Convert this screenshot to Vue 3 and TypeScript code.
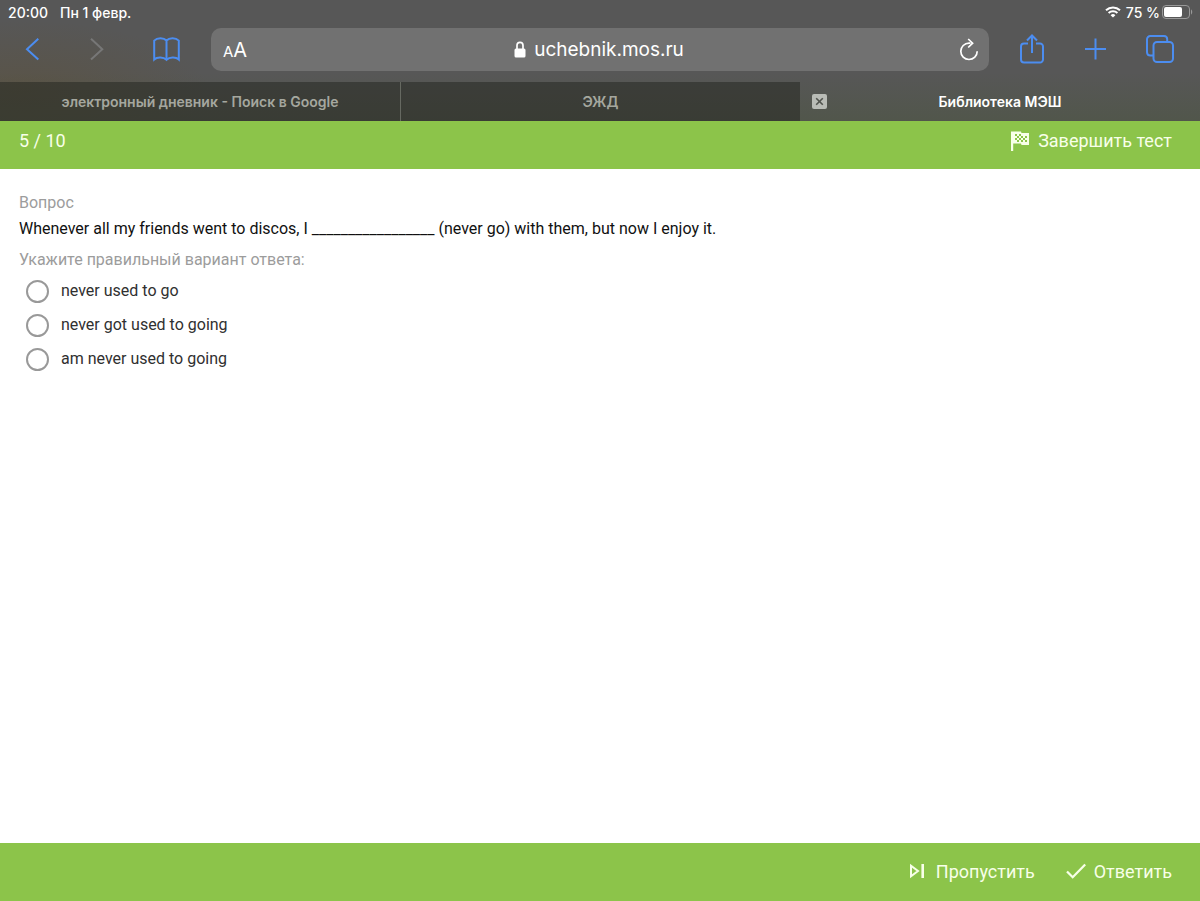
<script setup lang="ts">
import { ref } from 'vue'

interface Tab {
  title: string
  active: boolean
}

const tabs: Tab[] = [
  { title: 'электронный дневник - Поиск в Google', active: false },
  { title: 'ЭЖД', active: false },
  { title: 'Библиотека МЭШ', active: true },
]

const answers: string[] = ['never used to go', 'never got used to going', 'am never used to going']
const selected = ref<string>('')
</script>

<template>
  <div class="screen">
    <header class="browser">
      <div class="status">
        <span>20:00</span>
        <span class="date">Пн 1 февр.</span>
        <svg class="wifi" width="16" height="12" viewBox="0 0 16 12" fill="none" stroke="#fff" stroke-width="2">
          <path d="M1 4.3a10.2 10.2 0 0 1 14 0" />
          <path d="M3.6 7a6.4 6.4 0 0 1 8.8 0" />
          <path d="M8 11.6 5.6 9.2a3.4 3.4 0 0 1 4.8 0z" fill="#fff" stroke="none" />
        </svg>
        <span>75 %</span>
        <svg class="battery" width="31" height="14" viewBox="0 0 31 14" fill="none">
          <rect x="0.5" y="0.5" width="27" height="13" rx="3.5" stroke="#999" />
          <rect x="2" y="2" width="18" height="10" rx="2" fill="#fff" />
          <path d="M29 4.5c1.6.6 1.6 4.4 0 5z" fill="#999" />
        </svg>
      </div>

      <nav class="toolbar" aria-label="Safari">
        <div class="tools">
          <button type="button" aria-label="Назад">
            <svg width="28" height="28" viewBox="0 0 28 28"><path d="M19.3 3.8 8 14.2l11.3 10.4" /></svg>
          </button>
          <button type="button" aria-label="Вперёд" disabled>
            <svg width="28" height="28" viewBox="0 0 28 28"><path d="M8 3.8l11.3 10.4L8 24.6" /></svg>
          </button>
          <button type="button" class="book" aria-label="Закладки">
            <svg width="28" height="28" viewBox="0 0 28 28">
              <path d="M13.500 5.500C10.800 2.500 4.300 2.300 1.200 5.600V24.500C4.100 21.800 10.600 22 13.500 24.800 16.400 22 22.900 21.800 25.800 24.500V5.600C22.700 2.300 16.200 2.500 13.500 5.500zM13.500 5.500v19" />
            </svg>
          </button>
        </div>

        <div class="address">
          <button type="button" class="reader" aria-label="Параметры страницы"><span class="small">A</span>A</button>
          <a class="url" href="#">
            <svg width="12" height="17" viewBox="0 0 12 17">
              <path d="M3 8V4.600a3 3.300 0 0 1 6 0V8" fill="none" stroke="#fff" stroke-width="1.700" />
              <rect x="0.500" y="7.500" width="11" height="9" rx="1.500" fill="#fff" />
            </svg>
            <span>uchebnik.mos.ru</span>
          </a>
          <button type="button" class="reload" aria-label="Обновить">
            <svg width="20" height="24" viewBox="0 0 20 24" fill="none" stroke="#fff" stroke-width="1.700">
              <path d="M11.500 5.100H10a8.200 8.200 0 1 0 8.200 8.200" />
              <path d="M9.200 1l4.400 4.200-4.400 4.300" />
            </svg>
          </button>
        </div>

        <div class="tools">
          <button type="button" aria-label="Поделиться">
            <svg width="28" height="30" viewBox="0 0 28 30">
              <path d="M10 9.500H6a3 3 0 0 0-3 3V25.500a3 3 0 0 0 3 3H22a3 3 0 0 0 3-3V12.500a3 3 0 0 0-3-3h-4M14 19V1.500M9 6.500l5-5 5 5" />
            </svg>
          </button>
          <button type="button" aria-label="Новая вкладка">
            <svg width="28" height="28" viewBox="0 0 28 28"><path d="M13.500 3.500v21M3 14h21" /></svg>
          </button>
          <button type="button" aria-label="Все вкладки">
            <svg width="28" height="28" viewBox="0 0 28 28">
              <rect x="7.500" y="7" width="19.500" height="20" rx="3.500" />
              <path d="M7 20.500H4.300A3.300 3.300 0 0 1 1 17.300V4.300A3.300 3.300 0 0 1 4.300 1H18A3.300 3.300 0 0 1 21.200 4.300V7" />
            </svg>
          </button>
        </div>
      </nav>

      <div class="tabs">
        <div v-for="tab in tabs" :key="tab.title" class="tab" :class="{ active: tab.active }">
          <button v-if="tab.active" type="button" class="close" aria-label="Закрыть вкладку">
            <svg width="15" height="15" viewBox="0 0 15 15">
              <rect width="15" height="15" rx="2" fill="#b9bcb6" />
              <path d="M4.200 4.200l6.600 6.600M10.800 4.200l-6.600 6.600" stroke="#50534d" stroke-width="1.600" />
            </svg>
          </button>
          <a href="#">{{ tab.title }}</a>
        </div>
      </div>
    </header>

    <div class="testbar">
      <span>5 / 10</span>
      <button type="button" class="action">
        <svg width="20" height="22" viewBox="0 0 20 22">
          <path d="M1 1.500H11L11.500 3H19V15H11.500L11 13.500H3.200V21H1z" fill="#f8ffe9" />
          <path
            d="M5 4h2v2H5zM9 4h2v2H9zM7 6h2v2H7zM11 6h2v2h-2zM5 8h2v2H5zM9 8h2v2H9zM13 8h2v2h-2zM7 10h2v2H7zM11 10h2v2h-2zM15 6h2v2h-2zM15 10h2v2h-2z"
            fill="#8cc44a"
          />
        </svg>
        <span>Завершить тест</span>
      </button>
    </div>

    <main class="content">
      <h1 class="caption">Вопрос</h1>
      <p class="question">Whenever all my friends went to discos, I _________________ (never go) with them, but now I enjoy it.</p>
      <fieldset class="answers">
        <legend class="caption">Укажите правильный вариант ответа:</legend>
        <label v-for="answer in answers" :key="answer" class="answer">
          <input v-model="selected" type="radio" name="answer" :value="answer" />
          <span>{{ answer }}</span>
        </label>
      </fieldset>
    </main>

    <footer class="bottom">
      <button type="button" class="action skip">
        <svg width="16" height="16" viewBox="0 0 16 16" fill="none" stroke="#f8ffe9" stroke-width="2">
          <path d="M2 2.700v10.600l7-5.300z" />
          <path d="M13.700 1v14" stroke-width="2.600" />
        </svg>
        <span>Пропустить</span>
      </button>
      <button type="button" class="action">
        <svg width="20" height="16" viewBox="0 0 20 16" fill="none" stroke="#f8ffe9" stroke-width="2.300">
          <path d="M1 8.500l5.700 5.700L19.200 1.500" />
        </svg>
        <span>Ответить</span>
      </button>
    </footer>
  </div>
</template>

<style>
html,
body {
  margin: 0;
  background: #fff;
}
</style>

<style scoped>
.screen {
  display: flex;
  flex-direction: column;
  min-height: 100vh;
  background: #fff;
  font-family: Roboto, "Liberation Sans", sans-serif;
}
button {
  display: flex;
  align-items: center;
  justify-content: center;
  padding: 0;
  border: 0;
  background: none;
  color: inherit;
  font: inherit;
  cursor: pointer;
}
a {
  color: inherit;
  text-decoration: none;
}
svg {
  display: block;
  flex: none;
}
.browser {
  background:
    radial-gradient(ellipse 190px 70px at 20px 90px, rgba(96, 76, 34, 0.3), transparent),
    linear-gradient(#575757 0, #575757 60%, #51564b 100%);
  color: #fff;
  font-family: Inter, "Liberation Sans", sans-serif;
}
.status {
  display: flex;
  align-items: center;
  height: 24px;
  padding: 0 7px 0 8px;
  font-size: 14px;
  font-weight: 500;
}
.date {
  margin-left: 12px;
}
.wifi {
  margin: 0 5px 0 auto;
}
.battery {
  margin-left: 2px;
}
.toolbar {
  display: flex;
  align-items: center;
  height: 58px;
  box-sizing: border-box;
  padding: 0 18px 7px 11px;
}
.tools {
  display: flex;
  gap: 20px;
  padding-bottom: 2px;
}
.tools button {
  width: 44px;
  height: 44px;
}
.tools svg {
  fill: none;
  stroke: #4c8df0;
  stroke-width: 2;
}
.tools button:disabled svg {
  stroke: #777;
}
.tools .book {
  margin-left: 6px;
}
.address {
  display: flex;
  flex: 1;
  align-items: center;
  height: 43px;
  margin: 0 21px 0 22px;
  border-radius: 10px;
  background: #717171;
}
.reader {
  align-items: baseline;
  width: 48px;
  font-size: 20px;
}
.small {
  font-size: 15px;
}
.url {
  display: flex;
  flex: 1;
  align-items: center;
  justify-content: center;
  gap: 8px;
  font-size: 19px;
}
.reload {
  width: 40px;
  margin-left: 8px;
  padding-left: 0;
}
.url {
  padding-right: 2px;
}
.tabs {
  display: grid;
  grid-template-columns: repeat(3, 1fr);
  height: 39px;
}
.tab {
  display: flex;
  align-items: center;
  border-left: 1px solid #666961;
  background: rgba(38, 40, 34, 0.55);
  color: #a5a79f;
  font-size: 14px;
  font-weight: 600;
}
.tab:first-child,
.tab.active {
  border-left: 0;
}
.tab.active {
  background: none;
  color: #fff;
}
.tab a {
  flex: 1;
  text-align: center;
}
.close {
  width: 38px;
  height: 38px;
  margin-right: -38px;
}
.testbar {
  display: flex;
  justify-content: space-between;
  height: 48px;
  box-sizing: border-box;
  padding: 8px 28px 16px 19px;
  background: #8cc44a;
  color: #f8ffe9;
  font-size: 18px;
  line-height: 24px;
}
.action {
  gap: 8px;
}
.content {
  flex: 1;
  padding: 22px 19px;
}
.caption {
  margin: 0;
  padding: 0;
  color: #9c9c9c;
  font-size: 16px;
  font-weight: 400;
  line-height: 24px;
}
.question {
  margin: 0 0 5px;
  color: #111;
  font-size: 16px;
  line-height: 28px;
}
.answers {
  min-width: 0;
  margin: 0;
  padding: 0;
  border: 0;
}
.answer {
  display: flex;
  gap: 12px;
  width: fit-content;
  height: 34px;
  padding-left: 7px;
  color: #303030;
  font-size: 16px;
  line-height: 38px;
}
.answer input {
  appearance: none;
  box-sizing: border-box;
  width: 23px;
  height: 23px;
  margin: 8px 0 0;
  border: 2px solid #999;
  border-radius: 50%;
  background: #fff;
}
.answer input:checked {
  background: radial-gradient(#8cc44a 0 6px, #fff 7px);
}
.bottom {
  display: flex;
  align-items: center;
  justify-content: flex-end;
  gap: 31px;
  height: 58px;
  box-sizing: border-box;
  padding: 0 28px 2px;
  background: #8cc44a;
  color: #f8ffe9;
  font-size: 18px;
}
.skip {
  gap: 11px;
}
</style>
